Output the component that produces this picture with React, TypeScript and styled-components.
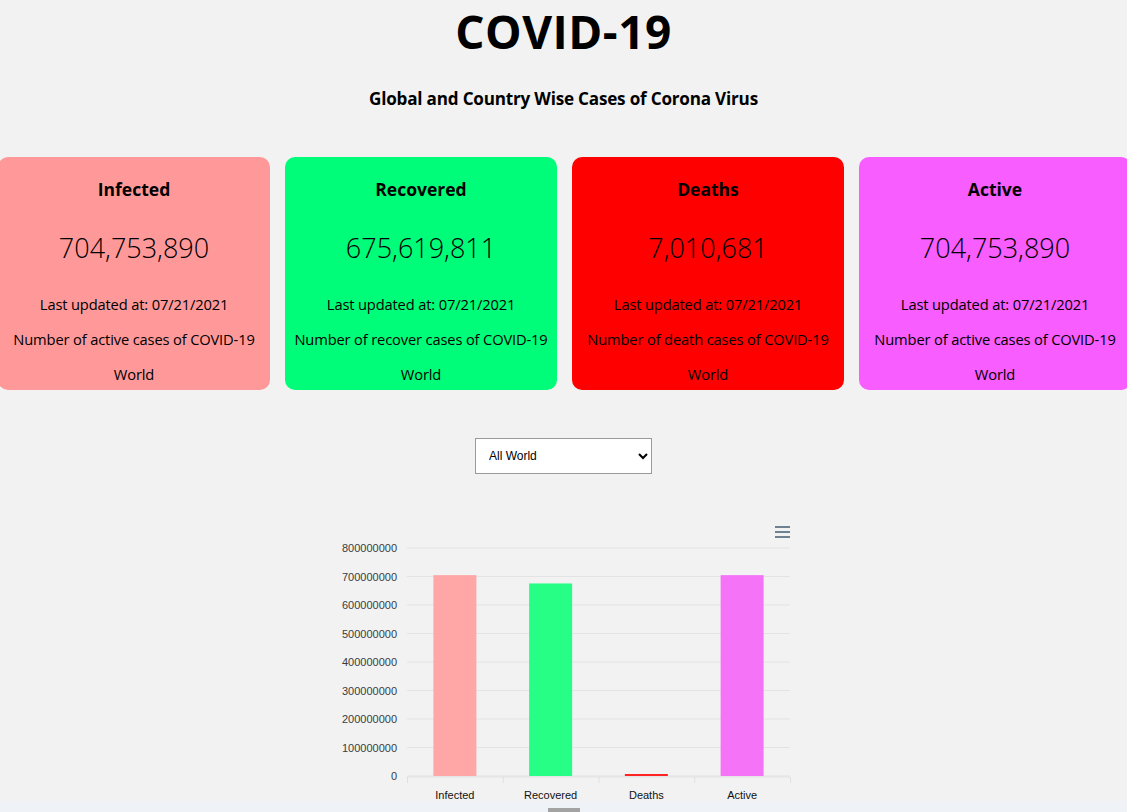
import React from "react";
import styled, { createGlobalStyle } from "styled-components";

const GlobalStyle = createGlobalStyle`
  html, body {
    margin: 0;
    padding: 0;
    background: #eff3f8;
    overflow: hidden;
  }
  * { box-sizing: border-box; }
`;

const Page = styled.div`
  background: #f2f2f2;
  font-family: "Open Sans", "Noto Sans", sans-serif;
  color: #000;
  text-align: center;
  width: 1127px;
  height: 801px;
  overflow: visible;
`;

const Title = styled.h1`
  margin: 0;
  font-size: 46px;
  font-weight: 700;
  line-height: 63px;
  letter-spacing: 0.5px;
`;

const Subtitle = styled.h2`
  margin: 24px 0 0;
  font-size: 17.1px;
  font-weight: 700;
  line-height: 24px;
  letter-spacing: -0.2px;
`;

const CardRow = styled.div`
  display: flex;
  gap: 15px;
  margin: 46px 0 0 -2px;
  width: 1133px;
`;

const Card = styled.div<{ $bg: string }>`
  flex: 0 0 272px;
  height: 233px;
  border-radius: 10px;
  background: ${(p) => p.$bg};
  display: flex;
  flex-direction: column;
  align-items: center;
`;

const CardTitle = styled.div`
  margin-top: 20px;
  font-size: 17.5px;
  font-weight: 700;
  line-height: 24px;
`;

const CardNumber = styled.div`
  margin-top: 29px;
  font-size: 27px;
  font-weight: 300;
  line-height: 36px;
`;

const CardLine = styled.div<{ $gap: number }>`
  margin-top: ${(p) => p.$gap}px;
  font-size: 14.7px;
  font-weight: 400;
  line-height: 24px;
  letter-spacing: -0.15px;
  white-space: nowrap;
`;

const SelectWrap = styled.div`
  display: flex;
  justify-content: center;
  margin-top: 48px;
`;

const Select = styled.select`
  width: 177px;
  height: 36px;
  border: 1px solid #9a9a9a;
  border-radius: 0;
  background: #fff;
  font-family: "Liberation Sans", Arial, sans-serif;
  font-size: 12px;
  color: #000;
  padding: 0 8px 0 9px;
  outline: none;
`;

const ChartWrap = styled.div`
  display: flex;
  justify-content: center;
  margin-top: 41px;
`;

const BottomBar = styled.div`
  width: 32px;
  height: 4px;
  background: #a3a3a3;
  margin: 7px 0 0 548px;
`;

const cards = [
  { title: "Infected", value: "704,753,890", desc: "Number of active cases of COVID-19", bg: "#ff9999" },
  { title: "Recovered", value: "675,619,811", desc: "Number of recover cases of COVID-19", bg: "#00fd79" },
  { title: "Deaths", value: "7,010,681", desc: "Number of death cases of COVID-19", bg: "#ff0000" },
  { title: "Active", value: "704,753,890", desc: "Number of active cases of COVID-19", bg: "#f75dff" },
];

const bars = [
  { label: "Infected", value: 704753890, color: "#ffa6a6" },
  { label: "Recovered", value: 675619811, color: "#26fe86" },
  { label: "Deaths", value: 7010681, color: "#ff2424" },
  { label: "Active", value: 704753890, color: "#f473f7" },
];

const Chart: React.FC = () => {
  const left = 84;
  const right = 467;
  const top = 33;
  const bottom = 261;
  const h = bottom - top;
  const cw = (right - left) / 4;
  const ticks = [800, 700, 600, 500, 400, 300, 200, 100, 0];
  return (
    <svg width={481} height={286} viewBox="0 0 481 286">
      {ticks.map((t, i) => {
        const y = top + (h / 8) * i;
        return (
          <g key={t}>
            <line x1={left} x2={right} y1={y} y2={y} stroke="#e3e3e3" strokeWidth={1} />
            <text
              x={74}
              y={y + 4}
              textAnchor="end"
              fontFamily="'Liberation Sans', Arial, sans-serif"
              fontSize={11}
              fill="#373d3f"
            >
              {t === 0 ? "0" : `${t}000000`}
            </text>
          </g>
        );
      })}
      {bars.map((b, i) => {
        const bh = Math.max(2, (b.value / 800000000) * h);
        const cx = left + cw * (i + 0.5);
        return (
          <g key={b.label}>
            <rect x={cx - 21.5} y={bottom - bh} width={43} height={bh} fill={b.color} />
            <text
              x={cx}
              y={284}
              textAnchor="middle"
              fontFamily="'Liberation Sans', Arial, sans-serif"
              fontSize={11}
              fill="#111"
            >
              {b.label}
            </text>
          </g>
        );
      })}
      <line x1={left} x2={right} y1={bottom + 1} y2={bottom + 1} stroke="#e0e0e0" strokeWidth={1} />
      {[0, 1, 2, 3, 4].map((i) => (
        <line
          key={i}
          x1={left + cw * i + 0.5}
          x2={left + cw * i + 0.5}
          y1={bottom + 1}
          y2={bottom + 7}
          stroke="#e0e0e0"
          strokeWidth={1}
        />
      ))}
      <g stroke="#6e8192" strokeWidth={2}>
        <line x1={452} x2={467} y1={12} y2={12} />
        <line x1={452} x2={467} y1={17} y2={17} />
        <line x1={452} x2={467} y1={22} y2={22} />
      </g>
    </svg>
  );
};

export default function App() {
  return (
    <>
      <GlobalStyle />
      <Page>
        <Title>COVID-19</Title>
        <Subtitle>Global and Country Wise Cases of Corona Virus</Subtitle>
        <CardRow>
          {cards.map((c) => (
            <Card key={c.title} $bg={c.bg}>
              <CardTitle>{c.title}</CardTitle>
              <CardNumber>{c.value}</CardNumber>
              <CardLine $gap={26}>Last updated at: 07/21/2021</CardLine>
              <CardLine $gap={11}>{c.desc}</CardLine>
              <CardLine $gap={11}>World</CardLine>
            </Card>
          ))}
        </CardRow>
        <SelectWrap>
          <Select defaultValue="all">
            <option value="all">All World</option>
          </Select>
        </SelectWrap>
        <ChartWrap>
          <Chart />
        </ChartWrap>
      </Page>
      <BottomBar />
    </>
  );
}
